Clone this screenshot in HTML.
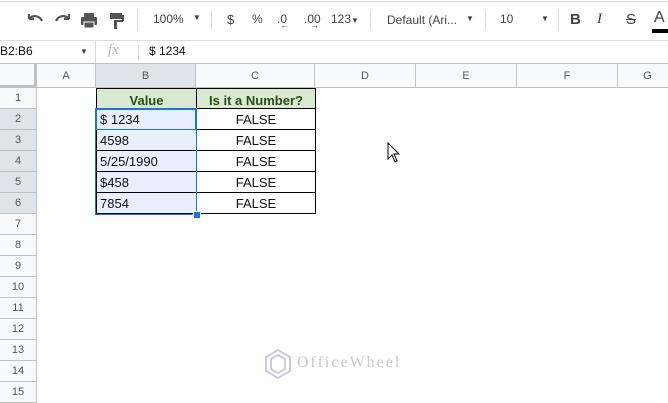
<!DOCTYPE html>
<html><head><style>
body{margin:0;width:668px;height:403px;overflow:hidden;background:#fff;font-family:"Liberation Sans",Arial,sans-serif;position:relative}
.a{position:absolute}
.tb{color:#444;font-size:13px}
.ch{position:absolute;top:64px;height:24px;line-height:24px;text-align:center;font-size:11px;color:#555;border-right:1px solid #c0c0c0;border-bottom:1px solid #c0c0c0;box-sizing:border-box;background:#f8f9fa}
.rh{position:absolute;left:0;width:37px;height:21px;line-height:21px;text-align:center;font-size:11px;color:#555;border-right:1px solid #c0c0c0;border-bottom:1px solid #c0c0c0;box-sizing:border-box;background:#f8f9fa}
.c{position:absolute;height:21px;line-height:21px;font-size:13px;box-sizing:border-box;color:#111}
</style></head><body>
<div class="a" style="left:0;top:1px;width:668px;height:1px;background:#dadce0"></div>
<div class="a" style="left:0;top:40px;width:668px;height:1px;background:#dadce0"></div>
<div class="a" style="left:0;top:63px;width:668px;height:1px;background:#c0c0c0"></div>
<svg class="a" style="left:26px;top:11px" width="110" height="20" viewBox="0 0 110 20">
<path d="M3 8 L3 3 M3 8 L8 8 M3.5 7.5 C7 4 13 4 16 10" stroke="#555" stroke-width="2.2" fill="none"/>
<path d="M43 8 L43 3 M43 8 L38 8 M42.5 7.5 C39 4 33 4 30 10" stroke="#555" stroke-width="2.2" fill="none"/>
<rect x="58" y="2" width="10" height="4" fill="#555"/><rect x="55" y="6" width="16" height="8" rx="1" fill="#555"/><rect x="58" y="11" width="10" height="6" fill="#555" stroke="#fff" stroke-width="1"/>
<rect x="84" y="2" width="12" height="6" fill="#555"/><rect x="96" y="4" width="2" height="6" fill="#555"/><rect x="88" y="9" width="9" height="2" fill="#555"/><rect x="88" y="10" width="3" height="8" fill="#555"/>
</svg>
<div class="a" style="left:137px;top:10px;width:1px;height:20px;background:#dadce0"></div>
<div class="a tb" style="left:153px;top:12px;font-size:12px">100%</div>
<div class="a tb" style="left:193px;top:13px;font-size:8px">▼</div>
<div class="a" style="left:211px;top:10px;width:1px;height:20px;background:#dadce0"></div>
<div class="a tb" style="left:227px;top:12px">$</div>
<div class="a tb" style="left:252px;top:12px;font-size:12px">%</div>
<div class="a tb" style="left:277px;top:12px;font-size:12px">.0</div>
<div class="a tb" style="left:280px;top:20px;font-size:9px">←</div>
<div class="a tb" style="left:304px;top:12px;font-size:12px">.00</div>
<div class="a tb" style="left:310px;top:20px;font-size:9px">→</div>
<div class="a tb" style="left:331px;top:12px;font-size:12px">123<span style="font-size:8px">▼</span></div>
<div class="a" style="left:370px;top:10px;width:1px;height:20px;background:#dadce0"></div>
<div class="a tb" style="left:387px;top:13px;font-size:12px">Default (Ari...</div>
<div class="a tb" style="left:466px;top:14px;font-size:8px">▼</div>
<div class="a" style="left:485px;top:10px;width:1px;height:20px;background:#dadce0"></div>
<div class="a tb" style="left:500px;top:12px;font-size:12px">10</div>
<div class="a tb" style="left:541px;top:14px;font-size:8px">▼</div>
<div class="a" style="left:558px;top:10px;width:1px;height:20px;background:#dadce0"></div>
<div class="a tb" style="left:570px;top:11px;font-weight:bold;font-size:15px">B</div>
<div class="a tb" style="left:597px;top:11px;font-style:italic;font-size:15px;font-family:'Liberation Serif',serif">I</div>
<div class="a tb" style="left:626px;top:11px;font-size:15px;text-decoration:line-through">S</div>
<div class="a tb" style="left:654px;top:9px;font-size:16px">A</div>
<div class="a" style="left:652px;top:29px;width:16px;height:4px;background:#000"></div>
<div class="a" style="left:0;top:44px;font-size:12px;color:#111">B2:B6</div>
<div class="a tb" style="left:80px;top:47px;font-size:8px">▼</div>
<div class="a" style="left:95px;top:41px;width:1px;height:22px;background:#dadce0"></div>
<div class="a" style="left:108px;top:42px;font-size:15px;color:#bbb;font-style:italic;font-family:'Liberation Serif',serif">fx</div>
<div class="a" style="left:138px;top:45px;width:1px;height:16px;background:#dadce0"></div>
<div class="a" style="left:149px;top:44px;font-size:12px;color:#111">$ 1234</div>
<div class="ch" style="left:0;width:37px;background:#f8f9fa;border-right:3px solid #c0c0c0;border-bottom:3px solid #c0c0c0"></div>
<div class="ch" style="left:37px;width:59px">A</div>
<div class="ch" style="left:96px;width:100px;background:#dfe3ea">B</div>
<div class="ch" style="left:196px;width:119px">C</div>
<div class="ch" style="left:315px;width:101px">D</div>
<div class="ch" style="left:416px;width:101px">E</div>
<div class="ch" style="left:517px;width:101px">F</div>
<div class="ch" style="left:618px;width:60px">G</div>
<div class="rh" style="top:88px">1</div>
<div class="rh" style="top:109px;background:#dfe3ea">2</div>
<div class="rh" style="top:130px;background:#dfe3ea">3</div>
<div class="rh" style="top:151px;background:#dfe3ea">4</div>
<div class="rh" style="top:172px;background:#dfe3ea">5</div>
<div class="rh" style="top:193px;background:#dfe3ea">6</div>
<div class="rh" style="top:214px">7</div>
<div class="rh" style="top:235px">8</div>
<div class="rh" style="top:256px">9</div>
<div class="rh" style="top:277px">10</div>
<div class="rh" style="top:298px">11</div>
<div class="rh" style="top:319px">12</div>
<div class="rh" style="top:340px">13</div>
<div class="rh" style="top:361px">14</div>
<div class="rh" style="top:382px">15</div>
<div class="c" style="left:96px;top:88px;width:101px;background:#d9ead3;border:1px solid #000;text-align:center;font-weight:bold;color:#274e13;line-height:23px">Value</div>
<div class="c" style="left:196px;top:88px;width:120px;background:#d9ead3;border:1px solid #000;text-align:center;font-weight:bold;color:#274e13;line-height:23px">Is it a Number?</div>
<div class="a" style="left:96px;top:109px;width:100px;height:105px;background:#e8f0fe"></div>
<div class="c" style="left:96px;top:109px;width:101px;border:1px solid #000;border-top:none;padding-left:3px">$ 1234</div>
<div class="c" style="left:96px;top:130px;width:101px;border:1px solid #000;border-top:none;padding-left:3px">4598</div>
<div class="c" style="left:96px;top:151px;width:101px;border:1px solid #000;border-top:none;padding-left:3px">5/25/1990</div>
<div class="c" style="left:96px;top:172px;width:101px;border:1px solid #000;border-top:none;padding-left:3px">$458</div>
<div class="c" style="left:96px;top:193px;width:101px;border:1px solid #000;border-top:none;padding-left:3px">7854</div>
<div class="c" style="left:196px;top:109px;width:120px;border:1px solid #000;border-top:none;text-align:center">FALSE</div>
<div class="c" style="left:196px;top:130px;width:120px;border:1px solid #000;border-top:none;text-align:center">FALSE</div>
<div class="c" style="left:196px;top:151px;width:120px;border:1px solid #000;border-top:none;text-align:center">FALSE</div>
<div class="c" style="left:196px;top:172px;width:120px;border:1px solid #000;border-top:none;text-align:center">FALSE</div>
<div class="c" style="left:196px;top:193px;width:120px;border:1px solid #000;border-top:none;text-align:center">FALSE</div>
<div class="a" style="left:95px;top:108px;width:100px;height:105px;border:1px solid #1a73e8"></div>
<div class="a" style="left:96px;top:109px;width:98px;height:19px;border:1px solid #1a73e8"></div>
<div class="a" style="left:193px;top:211px;width:6px;height:6px;background:#1a73e8;border:1px solid #fff"></div>
<svg class="a" style="left:387px;top:142px" width="14" height="22"><path d="M1 1 L1 17 L5 13 L8 20 L10 19 L7 12 L12 12 Z" fill="#fff" stroke="#000" stroke-width="1"/></svg>
<svg class="a" style="left:263px;top:348px" width="30" height="32"><path d="M15 2 L27 9 L27 23 L15 30 L3 23 L3 9 Z M15 7 L22 11 L22 21 L15 25 L8 21 L8 11 Z" fill="none" stroke="#ccd" stroke-width="2"/></svg>
<div class="a" style="left:297px;top:354px;font-size:16px;color:#c8c8d0;letter-spacing:2px;font-family:'Liberation Serif',serif">OfficeWheel</div>
</body></html>
